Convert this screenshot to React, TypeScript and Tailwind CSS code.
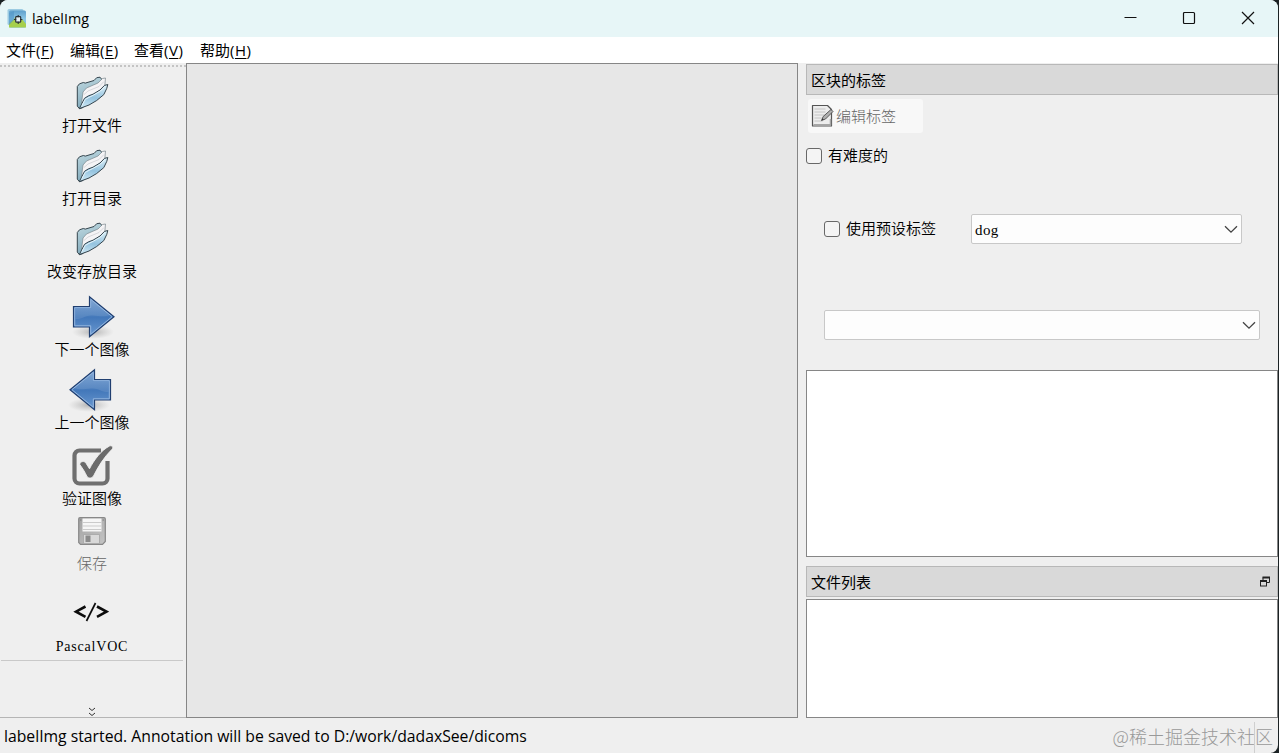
import type { ReactNode } from 'react'

function AppIcon() {
  return (
    <svg width="20" height="20" viewBox="0 0 20 20">
      <defs>
        <linearGradient id="app-bg" x1="0" y1="0" x2="0" y2="1">
          <stop offset="0" stopColor="#5f9fcb" />
          <stop offset="0.5" stopColor="#8cc7e6" />
          <stop offset="1" stopColor="#6fb0da" />
        </linearGradient>
      </defs>
      <rect x="0.5" y="0" width="16" height="16" rx="1.5" fill="#9ccbe2" />
      <rect x="2" y="1.500" width="17" height="17" rx="1.5" fill="url(#app-bg)" />
      <path d="M2 18.500V14.500L9 8l4 4 2-2 4 5v3.500z" fill="#a6cf4c" />
      <path d="M2 4l5-2v9l-5 5z" fill="#4f93c4" opacity=".6" />
      <rect x="8.700" y="7.700" width="5" height="5.500" rx="0.8" fill="#e8f0f2" stroke="#2a3136" strokeWidth="1.200" />
      <path d="M11.2 6v2.200M11.2 12.800v2.200M7 10.500h2.200M13.200 10.500h2.200" stroke="#2a3136" strokeWidth="1.100" />
    </svg>
  )
}

function FolderIcon() {
  return (
    <svg width="34" height="34" viewBox="0 0 34 34">
      <defs>
        <linearGradient id="folder-back" x1="0" y1="0" x2="0.3" y2="1">
          <stop offset="0" stopColor="#c3dbe2" />
          <stop offset="1" stopColor="#7fa9bb" />
        </linearGradient>
        <linearGradient id="folder-front" x1="0.6" y1="0" x2="0.4" y2="1">
          <stop offset="0" stopColor="#d5ebf5" />
          <stop offset="0.55" stopColor="#94c3df" />
          <stop offset="1" stopColor="#cce7f4" />
        </linearGradient>
      </defs>
      <path
        d="M2.300 10.500L4.500 7.800l3.800-1.300 2 .6L19 4.500l2.700-2.800 3.300-.5 1.500 1.800V12L8 31.500l-3.500 1.200-2.200-2.500z"
        fill="url(#folder-back)"
        stroke="#35454e"
        strokeWidth="1"
        strokeLinejoin="round"
      />
      <path d="M6.500 27.500L8 16l3.500-4L23 7l4.500-4.500 3-.5-.8 9-14 9.500z" fill="#f5f4f6" stroke="#7a868c" strokeWidth="0.7" strokeLinejoin="round" />
      <path d="M9 18.500l4-3.500L24 10.500l5-5" fill="none" stroke="#cfcfd3" strokeWidth="0.8" />
      <path
        d="M4.300 32.600L9.500 22.300l4-2.500 4.500-1.600L25 14l4.500-4.600 3.300-.9-1 3.800-3 6.300L21.700 24.500 14 29z"
        fill="url(#folder-front)"
        stroke="#35454e"
        strokeWidth="1"
        strokeLinejoin="round"
      />
      <path d="M7 29.300L10.300 23.300l8-4.100L25.500 15 30 10.500" fill="none" stroke="#eef8fc" strokeWidth="0.9" />
    </svg>
  )
}

function ArrowIcon({ left = false }: { left?: boolean }) {
  return (
    <svg width="46" height="46" viewBox="0 0 46 46" className={left ? '-ml-1' : 'ml-1'}>
      <defs>
        <linearGradient id="arrow-fill" x1="0" y1="0" x2="0" y2="1">
          <stop offset="0" stopColor="#769fd0" />
          <stop offset="0.52" stopColor="#4378ba" />
          <stop offset="1" stopColor="#6c9ad1" />
        </linearGradient>
        <radialGradient id="arrow-shadow">
          <stop offset="0" stopColor="#777" stopOpacity=".5" />
          <stop offset="1" stopColor="#999" stopOpacity="0" />
        </radialGradient>
      </defs>
      <ellipse cx="22" cy="38" rx="21" ry="7" fill="url(#arrow-shadow)" />
      <g transform={left ? 'translate(46 0) scale(-1 1)' : undefined}>
        <path d="M2.500 12.500h16V2.800L43 22.700 18.500 42.800V33h-16z" fill="url(#arrow-fill)" stroke="#213f70" strokeWidth="1.200" />
        <path d="M3.700 13.700h16V5.300L41.100 22.700 19.700 40.300v-8.500h-16z" fill="none" stroke="#93b6df" strokeWidth="1" />
        <path d="M4.500 25c8 0 10-4 17-3.500 7 .5 12 1.500 18-.5L20.300 6v8.500H4.500z" fill="#fff" opacity=".1" />
      </g>
    </svg>
  )
}

function VerifyIcon() {
  return (
    <svg width="42" height="42" viewBox="0 0 42 42" fill="none">
      <path d="M30 5.500H8.500a5 5 0 0 0-5 5v23a5 5 0 0 0 5 5h23a5 5 0 0 0 5-5V16" stroke="#6f6f6f" strokeWidth="4.200" />
      <path
        d="M8.800 19.500c0-3 4.500-4.200 6.200-1.300l3.500 5.600C23 15 30 5.500 38.500 1c2.500-1 4.300 1.500 2.500 3.300C33 12 27 22 22.500 31c-1.800 2.700-5 2.700-6.700.2C14.500 28 12 24 8.800 19.500z"
        fill="#6b6b6b"
        stroke="#efefef"
        strokeWidth="0.9"
      />
    </svg>
  )
}

function SaveIcon() {
  return (
    <svg width="28" height="28" viewBox="0 0 28 28">
      <defs>
        <linearGradient id="disk" x1="0" y1="0" x2="1" y2="1">
          <stop offset="0" stopColor="#a3a3a3" />
          <stop offset="1" stopColor="#c4c4c4" />
        </linearGradient>
      </defs>
      <path d="M.7 2Q.7.700 2 .7h24q1.300 0 1.300 1.300v22.500l-2.800 2.800H2.500L.7 25.500z" fill="url(#disk)" stroke="#888" strokeWidth="1.200" />
      <path d="M4.500 1.500h19v13h-19z" fill="#f6f6f6" />
      <path d="M4.500 5.500h19M4.500 9h19M4.500 12.500h19" stroke="#cbcbcb" />
      <path d="M5.500 17.500h16v9h-16z" fill="#d9d9d9" stroke="#a5a5a5" strokeWidth="0.8" />
      <path d="M7.500 18.500h5v6.500h-5z" fill="#8b8b8b" />
      <path d="M2 3h1.500M24.500 3H26" stroke="#7c7c7c" />
    </svg>
  )
}

function CodeIcon() {
  return (
    <svg width="36" height="20" viewBox="0 0 36 20" fill="none" stroke="#0c0c0c">
      <path d="M12.500 4.500L3 9.700l9.500 5.200M24 4.500l9.500 5.200-9.500 5.200" strokeWidth="2.600" />
      <path d="M22.500 1L13.500 19" strokeWidth="1.700" />
    </svg>
  )
}

function EditIcon() {
  return (
    <svg width="23" height="24" viewBox="0 0 23 24">
      <path d="M1.500 1.500h15l4 4v16.500h-19z" fill="#ededed" stroke="#555" strokeWidth="1.200" strokeLinejoin="round" />
      <path d="M3.500 5h11M3.500 8h11M3.500 11h10M3.500 14h7M3.500 17h8" stroke="#c4c4c4" />
      <path d="M2.500 20.800h17V15" fill="none" stroke="#a5a5a5" strokeWidth="1.500" />
      <path d="M10.500 16.500l1.700-4 7.800-7 2 2-7.500 7.500z" fill="#b0b0b0" stroke="#4c4c4c" strokeWidth="0.9" strokeLinejoin="round" />
      <path d="M10.500 16.500l1-2.300 1.300 1.300z" fill="#333" />
    </svg>
  )
}

function Chevron() {
  return (
    <svg width="14" height="9" viewBox="0 0 14 9" fill="none" stroke="#444" strokeWidth="1.300">
      <path d="M1 1.200l6 6 6-6" />
    </svg>
  )
}

const menus = [
  { label: '文件', key: 'F', width: 'w-16' },
  { label: '编辑', key: 'E', width: 'w-16' },
  { label: '查看', key: 'V', width: 'w-[66px]' },
  { label: '帮助', key: 'H', width: 'w-16' },
]

const tools: { label: string; icon: ReactNode; space: string; disabled?: boolean }[] = [
  { label: '打开文件', icon: <FolderIcon />, space: 'mb-2.5' },
  { label: '打开目录', icon: <FolderIcon />, space: 'mb-2.5' },
  { label: '改变存放目录', icon: <FolderIcon />, space: 'mb-[15px]' },
  { label: '下一个图像', icon: <ArrowIcon />, space: 'mb-2.5' },
  { label: '上一个图像', icon: <ArrowIcon left />, space: 'mb-[13px]' },
  { label: '验证图像', icon: <VerifyIcon />, space: 'mb-0.5' },
  { label: '保存', icon: <SaveIcon />, space: 'mb-[18px]', disabled: true },
]

function CheckBox({ label }: { label: string }) {
  return (
    <label className="flex items-center">
      <span className="mr-1.5 h-4 w-4 rounded-[3px] border border-[#686868] bg-[#f4f4f4]" />
      <span className="pb-px">{label}</span>
    </label>
  )
}

function DockTitle({ title, children }: { title: string; children?: ReactNode }) {
  return (
    <div className="flex h-[31px] shrink-0 items-center justify-between border border-[#b8b8b8] bg-[#d9d9d9] pr-[7px] pl-1">
      <span>{title}</span>
      {children}
    </div>
  )
}

export default function App() {
  return (
    <div className="h-[753px] w-[1279px] overflow-hidden bg-[#1b2224]">
      <div className="flex h-full w-[1278px] flex-col overflow-hidden rounded-t-lg rounded-br-lg bg-[#efefef] font-['Open_Sans','Noto_Sans_CJK_SC',sans-serif] text-[15px] leading-5 text-black">
        <header className="flex h-[37px] shrink-0 items-center bg-[#e7f6f7] pl-[7px]">
          <AppIcon />
          <span className="ml-[5px] text-[14.3px]">labelImg</span>
          <div className="mr-[23px] ml-auto flex items-center gap-[45px] pb-0.5">
            <svg width="14" height="14" viewBox="0 0 14 14" stroke="#111">
              <path d="M1.500 6.500h12" />
            </svg>
            <svg width="14" height="14" viewBox="0 0 14 14" fill="none" stroke="#111" strokeWidth="1.200">
              <rect x="1.500" y="1.500" width="11" height="11" rx="1" />
            </svg>
            <svg width="14" height="14" viewBox="0 0 14 14" stroke="#111" strokeWidth="1.200">
              <path d="M1 1l12 12M13 1L1 13" />
            </svg>
          </div>
        </header>

        <nav className="flex h-[26px] shrink-0 items-center bg-white pl-1.5">
          {menus.map((m) => (
            <span key={m.key} className={`${m.width} whitespace-nowrap`}>
              {m.label}
              <span className="tracking-[0.5px]">
                (<span className="underline underline-offset-2">{m.key}</span>)
              </span>
            </span>
          ))}
        </nav>

        <main className="flex h-[655px] shrink-0">
          <aside className="flex w-[186px] shrink-0 flex-col border-b border-[#b5b5b5] bg-[#efefef] pt-0.5">
            <div className="mb-1.5 h-0.5 border-t-2 border-dotted border-[#c4c4c4]" />
            <div className="flex w-[184px] flex-1 flex-col items-center">
              {tools.map((t) => (
                <div key={t.label} className={`flex h-[63px] shrink-0 flex-col items-center ${t.space}`}>
                  <div className="flex h-10 items-center justify-center">{t.icon}</div>
                  <span className={t.disabled ? 'mt-0.5 font-light text-[#666]' : 'mt-0.5 font-[350]'}>{t.label}</span>
                </div>
              ))}
              <div className="flex h-[69px] w-[182px] shrink-0 flex-col items-center border-b border-[#c9c9c9]">
                <div className="-ml-0.5 flex h-10 items-center">
                  <CodeIcon />
                </div>
                <span className="mt-[5px] font-['Liberation_Serif',serif] text-[14px] tracking-[0.8px]">PascalVOC</span>
              </div>
              <svg width="8" height="10" viewBox="0 0 8 10" fill="none" stroke="#333" className="mt-[46px]">
                <path d="M1 1l3 2.500L7 1M1 6l3 2.500L7 6" />
              </svg>
            </div>
          </aside>

          <section className="w-[612px] shrink-0 border border-[#868686] bg-[#e7e7e7]" />

          <aside className="ml-2 flex w-[472px] flex-col pt-px">
            <DockTitle title="区块的标签" />
            <div className="flex h-[275px] shrink-0 flex-col font-[350]">
              <button className="mt-1 ml-0.5 flex h-[34px] w-[115px] items-center rounded-[3px] bg-[#f8f8f8] pl-[3px] font-light text-[#666]">
                <EditIcon />
                <span className="ml-0.5 pb-px">编辑标签</span>
              </button>
              <div className="mt-3">
                <CheckBox label="有难度的" />
              </div>
              <div className="mt-12 ml-[18px] flex items-center">
                <div className="pb-px">
                  <CheckBox label="使用预设标签" />
                </div>
                <div className="ml-[35px] flex h-[30px] w-[271px] items-center justify-between rounded-[2px] border border-[#c8c8c8] bg-[#fdfdfd] pr-[3px] pl-[3px]">
                  <span className="pt-px font-['Liberation_Serif',serif] text-[15px] font-normal tracking-[0.4px]">dog</span>
                  <Chevron />
                </div>
              </div>
              <div className="mt-[66px] ml-[18px] flex h-[30px] w-[436px] shrink-0 items-center justify-end rounded-[2px] border border-[#c8c8c8] bg-[#fdfdfd] pr-[3px]">
                <Chevron />
              </div>
            </div>
            <div className="h-[187px] shrink-0 border border-[#868686] bg-white" />
            <div className="h-[9px] shrink-0" />
            <DockTitle title="文件列表">
              <svg width="10" height="11" viewBox="0 0 10 11" fill="none" stroke="#222">
                <path d="M3 4V1.500h6.500v5H7" />
                <path d="M2.500 1.500H10" strokeWidth="2" />
                <rect x="0.500" y="4.500" width="6" height="5.500" />
                <path d="M0 5h7" strokeWidth="2" />
              </svg>
            </DockTitle>
            <div className="mt-0.5 flex-1 border border-[#868686] bg-white" />
          </aside>
        </main>

        <footer className="flex h-[35px] shrink-0 items-center justify-between pr-[5px] pl-1">
          <span className="text-[15.74px]">labelImg started. Annotation will be saved to D:/work/dadaxSee/dicoms</span>
          <span className="relative font-['Noto_Sans_CJK_SC',sans-serif] text-[18px] font-light text-[#999]">
            @稀土掘金技术社区
            <span className="absolute -top-1 right-[18px] h-8 w-px bg-[#cfcfcf]" />
          </span>
        </footer>
      </div>
    </div>
  )
}
